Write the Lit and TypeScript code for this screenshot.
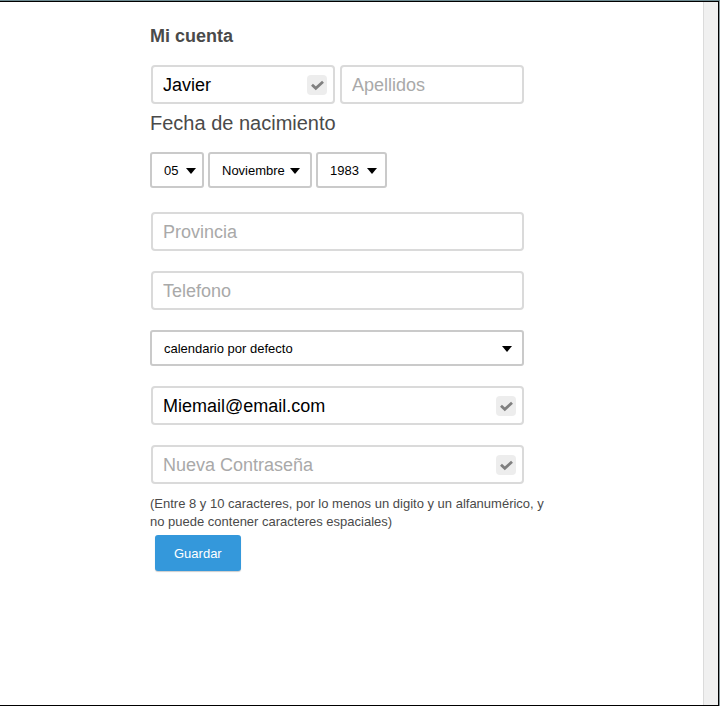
import { LitElement, css, html } from "lit";
import { customElement, property } from "lit/decorators.js";

@customElement("text-field")
class TextField extends LitElement {
  @property() label = "";
  @property() type = "text";
  @property() value = "";
  @property({ type: Boolean }) valid = false;

  static styles = css`
    :host {
      display: block;
    }
    .field {
      position: relative;
      display: block;
    }
    .input {
      display: block;
      box-sizing: border-box;
      width: 100%;
      height: 39px;
      padding: 2px 10px 0;
      border: 2px solid #dadada;
      border-radius: 4px;
      background: #fff;
      color: #000;
      font: 18px "Liberation Sans", Arial, sans-serif;
      outline: none;
    }
    .input::placeholder {
      color: #a9a9a9;
      opacity: 1;
    }
    .tick {
      position: absolute;
      right: 8px;
      top: 10px;
      width: 20px;
      height: 20px;
    }
  `;

  render() {
    return html`
      <div class="field">
        <input
          class="input"
          type=${this.type}
          aria-label=${this.label}
          placeholder=${this.label}
          .value=${this.value}
        />
        ${this.valid
          ? html`<svg class="tick" viewBox="0 0 20 20" aria-hidden="true">
              <rect width="20" height="20" rx="4" fill="#ededed" />
              <path d="M5 9.8 8.8 13.3 16 6.8" fill="none" stroke="#808080" stroke-width="2.8" />
            </svg>`
          : null}
      </div>
    `;
  }
}

@customElement("select-field")
class SelectField extends LitElement {
  @property() label = "";
  @property() value = "";

  static styles = css`
    :host {
      display: block;
    }
    .field {
      position: relative;
    }
    .select {
      display: block;
      box-sizing: border-box;
      width: 100%;
      height: 36px;
      padding: 0 20px 0 12px;
      border: 2px solid #cacaca;
      border-radius: 3px;
      background: #fff;
      color: #000;
      font: 13px "Liberation Sans", Arial, sans-serif;
      appearance: none;
      outline: none;
    }
    .arrow {
      position: absolute;
      right: var(--arrow-inset, 12px);
      top: 16px;
      width: 10px;
      height: 6px;
      pointer-events: none;
    }
  `;

  render() {
    return html`
      <div class="field">
        <select class="select" aria-label=${this.label}>
          <option>${this.value}</option>
        </select>
        <svg class="arrow" viewBox="0 0 10 6" aria-hidden="true">
          <path d="M0 0h10L5 6z" />
        </svg>
      </div>
    `;
  }
}

@customElement("app-root")
class AppRoot extends LitElement {
  static styles = css`
    :host {
      display: block;
      font-family: "Liberation Sans", Arial, sans-serif;
      color: #4a4a4a;
      background: #fff;
    }
    .window {
      box-sizing: border-box;
      display: flex;
      min-height: 100vh;
      border-top: 1px solid #6d8a91;
      border-right: 1px solid #8a989c;
    }
    .page {
      flex: 1;
      display: flex;
      border: solid #000;
      border-width: 1px 1px 1px 0;
    }
    .main {
      flex: 1;
      padding: 24px 24px 24px 150px;
    }
    .track {
      width: 14px;
      border-left: 1px solid #dbdbdb;
      background: #f0f0f0;
    }
    .form {
      max-width: 400px;
    }
    .title {
      margin: 0 0 19px;
      font-size: 18px;
      line-height: 20px;
    }
    .fields {
      display: flex;
      flex-direction: column;
      gap: 20px;
      max-width: 374px;
    }
    .inset {
      padding-left: 1px;
    }
    .names {
      box-sizing: border-box;
      display: grid;
      grid-template-columns: 1fr 1fr;
      gap: 5px;
      max-width: 374px;
      padding-left: 1px;
    }
    .birth {
      margin: 0 0 24px;
      padding: 0;
      border: 0;
    }
    .legend {
      padding: 7px 0 17px;
      font-size: 20px;
      line-height: 24px;
    }
    .dates {
      display: grid;
      grid-template-columns: 54px 104px 71px;
      gap: 4px;
    }
    .day {
      --arrow-inset: 8px;
    }
    .year {
      --arrow-inset: 10px;
    }
    .hint {
      margin: 11px 0 4px;
      font-size: 13px;
      line-height: 18px;
    }
    .save {
      height: 36px;
      margin-left: 5px;
      padding: 0 19px;
      border: 0;
      border-radius: 3px;
      background: #3498db;
      box-shadow: 0 1px 1px #cccccc;
      color: #fff;
      font: 13px "Liberation Sans", Arial, sans-serif;
    }
  `;

  render() {
    return html`
      <div class="window">
        <div class="page">
          <main class="main">
            <form class="form">
              <h1 class="title">Mi cuenta</h1>
              <div class="names">
                <text-field label="Nombre" value="Javier" valid></text-field>
                <text-field label="Apellidos"></text-field>
              </div>
              <fieldset class="birth">
                <legend class="legend">Fecha de nacimiento</legend>
                <div class="dates">
                  <select-field class="day" label="Día" value="05"></select-field>
                  <select-field label="Mes" value="Noviembre"></select-field>
                  <select-field class="year" label="Año" value="1983"></select-field>
                </div>
              </fieldset>
              <div class="fields">
                <text-field class="inset" label="Provincia"></text-field>
                <text-field class="inset" label="Telefono" type="tel"></text-field>
                <select-field label="Calendario" value="calendario por defecto"></select-field>
                <text-field class="inset" label="Email" type="email" value="Miemail@email.com" valid></text-field>
                <text-field class="inset" label="Nueva Contraseña" type="password" valid></text-field>
              </div>
              <p class="hint">
                (Entre 8 y 10 caracteres, por lo menos un digito y un alfanumérico, y
                no puede contener caracteres espaciales)
              </p>
              <button class="save" type="button">Guardar</button>
            </form>
          </main>
          <div class="track"></div>
        </div>
      </div>
    `;
  }
}
